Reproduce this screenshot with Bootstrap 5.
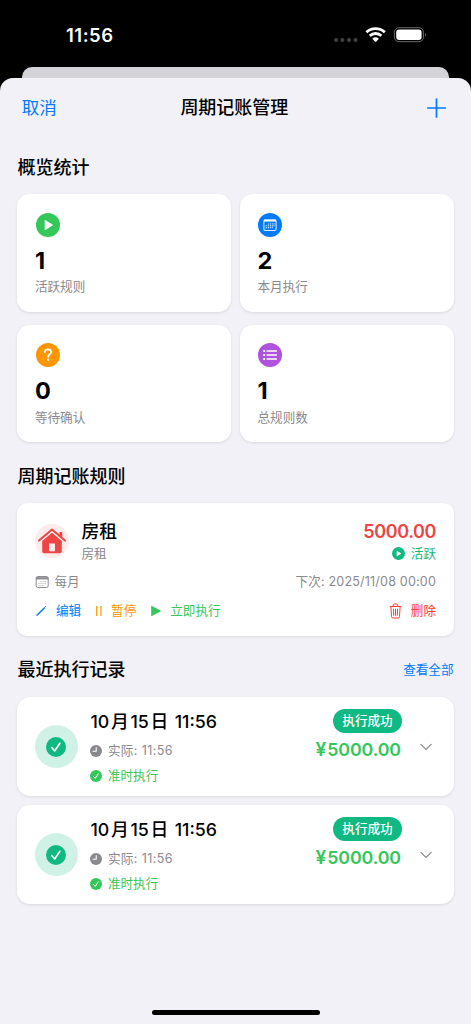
<!DOCTYPE html>
<html lang="zh-CN">
<head>
<meta charset="utf-8">
<meta name="viewport" content="width=device-width, initial-scale=1">
<title>周期记账管理</title>
<link href="https://cdn.jsdelivr.net/npm/bootstrap@5.3.0/dist/css/bootstrap.min.css" rel="stylesheet">
<style>
:root{--ios-blue:#007aff;--ios-green:#34c759;--ios-orange:#ff9500;--ios-red:#ff3b30;--ios-gray:#8a8a8e;--emerald:#10b981;--rose:#ef4444}
body{font-family:Inter,"Noto Sans CJK SC",sans-serif;background:#000;color:#000;height:1024px;overflow:hidden}
svg{display:block;flex:none}
.statusbar{height:67px;padding:22px 44px 0 66px}
.clock{font-size:18.5px;line-height:27px;font-weight:600;letter-spacing:.5px}
.sheet-back{height:11px;margin:0 22px;background:#d4d3d8;border-radius:10px 10px 0 0}
.sheet{height:946px;background:#f2f1f7;border-radius:13px 13px 0 0;padding:0 17.5px 0 17.4px;position:relative}
.topbar{height:60px;padding:0 6.5px 0 4.4px}
.topbar>*{flex:1}
.nav-btn{color:var(--ios-blue);font-size:17.5px;line-height:26px}
.nav-title{font-size:18px;line-height:26px;font-weight:500;white-space:nowrap}
.section-title{font-size:18px;line-height:28px;font-weight:500;margin:0}
.panel{border:0;border-radius:13px;background:#fff;box-shadow:0 1px 3px rgba(0,0,0,.1)}
.stats{display:grid;grid-template-columns:1fr 1fr;gap:13px 9px;margin:12.4px 0 20.6px}
.stat{height:117.5px;padding:18.5px 17.5px 0}
.stat svg{margin-left:1px}
.stat-num{font-size:23.5px;line-height:28px;font-weight:700;margin-top:10px}
.caption{font-size:12.6px;line-height:18px;color:var(--ios-gray);white-space:nowrap}
.stat .caption{margin-top:3.5px}
.rule{height:133.5px;border-radius:10px;padding:15px 17.5px 0;margin:12px 0 19.5px}
.house{width:34px;height:34px;border-radius:50%;background:#fdecec;margin-top:6px}
.rule-copy{margin-left:12.5px}
.rule-name{font-size:17.8px;line-height:27px;font-weight:500}
.rule-meta{margin-top:10px}
.rule-actions{margin-top:11px}
.next-run{letter-spacing:.16px}
.amount{font-size:18px;line-height:27px;font-weight:600;color:var(--rose);letter-spacing:-.4px}
.icon-text{display:flex;align-items:center;gap:5.5px}
.c-blue{color:var(--ios-blue)}.c-orange{color:var(--ios-orange)}.c-green{color:var(--ios-green)}.c-red{color:var(--ios-red)}.c-em{color:var(--emerald)}
.records{display:grid;gap:8.5px;margin-top:13px}
.record{height:99.5px;padding:12px 17.5px 0}
.halo{width:43px;height:43px;border-radius:50%;background:#cff1e6;margin-top:16.5px}
.rec-copy{margin-left:12.5px}
.rec-copy .caption{margin-top:7px}
.rec-time{font-size:17.8px;line-height:26px;font-weight:500;white-space:nowrap}
.rec-time span{margin:0 1.7px}
.actual{letter-spacing:.38px}
.pill{background:var(--emerald);color:#fff;border-radius:12px;font-size:12.6px;font-weight:500;line-height:23.5px;height:24px;width:69px;text-align:center}
.rec-amount{font-size:17.8px;line-height:26px;font-weight:600;color:var(--ios-green);letter-spacing:-.1px;margin:4px 1px 0 0}
.yen{letter-spacing:1px;margin-left:1px;font-size:19px}
.chevron{margin:34px 3px 0 17px}
.home-bar{width:168px;height:5.5px;border-radius:3px;background:#000;position:absolute;left:151.5px;bottom:9px}
</style>
</head>
<body>
<svg width="0" height="0" class="position-absolute">
  <defs>
    <symbol id="play-circle" viewBox="0 0 24 24"><circle cx="12" cy="12" r="12" fill="currentColor"/><path d="M8.7 7.4v9.2q0 .8.8.4l7-4.4q.7-.5 0-1l-7-4.4q-.8-.4-.8.2z" fill="#fff"/></symbol>
    <symbol id="check-circle" viewBox="0 0 24 24"><circle cx="12" cy="12" r="12" fill="currentColor"/><path d="M6.9 12.7l3.5 4.1 6.3-9.3" fill="none" stroke="#fff" stroke-width="1.9" stroke-linecap="round" stroke-linejoin="round"/></symbol>
    <symbol id="clock-dot" viewBox="0 0 12 12"><circle cx="6" cy="6" r="6" fill="currentColor"/><path d="M6.2 2.6V6.2H3" fill="none" stroke="#fff" stroke-width="1.1" stroke-linecap="round" stroke-linejoin="round"/></symbol>
  </defs>
</svg>

<header class="statusbar d-flex justify-content-between align-items-start text-white">
  <div class="clock">11:56</div>
  <svg width="94" height="27" viewBox="0 0 94 27">
    <g fill="#424242"><circle cx="3" cy="18" r="2"/><circle cx="9.5" cy="18" r="2"/><circle cx="16" cy="18" r="2"/><circle cx="22.5" cy="18" r="2"/></g>
    <g fill="none" stroke="#fff" stroke-width="2.8"><path d="M33.4 10.3a13.3 13.3 0 0 1 18.4 0"/><path d="M36.8 13.8a8.4 8.4 0 0 1 11.6 0"/></g>
    <path d="M39.3 16.8a5 5 0 0 1 6.6 0l-2.6 2.7q-.7.6-1.4 0z" fill="#fff"/>
    <rect x="61.4" y="5.7" width="29" height="14" rx="4.5" fill="none" stroke="#6b6b6b"/>
    <rect x="63.2" y="7.4" width="25.4" height="10.6" rx="3" fill="#fff"/>
    <path d="M92 10.6q1.6 2.1 0 4.2z" fill="#777"/>
  </svg>
</header>
<div class="sheet-back"></div>

<main class="sheet">
  <nav class="topbar d-flex align-items-center">
    <div class="nav-btn">取消</div>
    <div class="nav-title text-center">周期记账管理</div>
    <div class="d-flex justify-content-end"><svg width="21" height="20" viewBox="0 0 21 20"><path d="M1.8 10h17.6M10.5 1v18" stroke="#007aff" stroke-width="1.7" stroke-linecap="round"/></svg></div>
  </nav>

  <h2 class="section-title mt-3 overview">概览统计</h2>
  <section class="stats">
    <div class="card panel stat">
      <svg class="c-green" width="24" height="24"><use href="#play-circle"/></svg>
      <div class="stat-num">1</div><div class="caption">活跃规则</div>
    </div>
    <div class="card panel stat">
      <svg width="24" height="24" viewBox="0 0 24 24"><circle cx="12" cy="12" r="12" fill="#007aff"/><rect x="5.9" y="6.7" width="12.2" height="10.8" rx="1.5" fill="none" stroke="#d9ebff" stroke-width="1.1"/><path d="M6 7.7h12" stroke="#fff" stroke-width="1.7"/><path d="M8.2 12v4M10.4 10.5v5.5M12.4 10.2v5.5M14.3 10.2v5.5M16 10.2v3.3" stroke="#b9d9ff" stroke-width="1.1" stroke-dasharray="1.3 .5"/></svg>
      <div class="stat-num">2</div><div class="caption">本月执行</div>
    </div>
    <div class="card panel stat">
      <svg width="24" height="24" viewBox="0 0 24 24"><circle cx="12" cy="12" r="12" fill="#ff9500"/><path d="M8.9 9c.1-1.6 1.3-2.6 3.1-2.6s3.2 1 3.2 2.6c0 2.2-3 2.3-3 4.7" fill="none" stroke="#fff" stroke-width="1.8" stroke-linecap="round"/><circle cx="12.1" cy="16.8" r="1.2" fill="#fff"/></svg>
      <div class="stat-num">0</div><div class="caption">等待确认</div>
    </div>
    <div class="card panel stat">
      <svg width="24" height="24" viewBox="0 0 24 24"><circle cx="12" cy="12" r="12" fill="#af52de"/><path d="M9 8h9.4M9 12h9.4M9 16h9.4" stroke="#fff" stroke-width="1.3" stroke-linecap="round"/><path d="M5.3 8h1.8M5.3 12h1.8M5.3 16h1.8" stroke="#fff" stroke-width="1.9"/></svg>
      <div class="stat-num">1</div><div class="caption">总规则数</div>
    </div>
  </section>

  <h2 class="section-title">周期记账规则</h2>
  <section class="card panel rule">
    <div class="d-flex">
      <div class="house"><svg width="34" height="34" viewBox="0 0 34 34"><path d="M4 16.6L17 5.6l13 11" fill="none" stroke="#ef4444" stroke-width="2" stroke-linecap="round" stroke-linejoin="round"/><path d="M24.5 8h2.8v5.7l-2.8-2.4z" fill="#ef4444"/><path fill-rule="evenodd" d="M17 8.7l9.8 8.3v10.2q0 2-2 2H9.2q-2 0-2-2V17zM14 19.5v7.7h6v-7.7z" fill="#ef4444"/></svg></div>
      <div class="flex-grow-1 rule-copy">
        <div class="rule-name">房租</div><div class="caption">房租</div>
      </div>
      <div class="text-end">
        <div class="amount">5000.00</div>
        <div class="caption c-em icon-text justify-content-end"><svg width="13" height="13"><use href="#play-circle"/></svg><span>活跃</span></div>
      </div>
    </div>
    <div class="d-flex justify-content-between align-items-center caption rule-meta">
      <div class="icon-text"><svg width="14" height="14" viewBox="0 0 14 14"><rect x="1.2" y="1.5" width="12" height="11" rx="1.7" fill="none" stroke="#8a8a8e"/><path d="M1 3.3h12.4" stroke="#8a8a8e" stroke-width="2.2"/><path d="M3.5 8.6h1M3.5 10.6h1M5.5 6.6h1M5.5 8.6h1M5.5 10.6h1M7.5 6.6h1M7.5 8.6h1M7.5 10.6h1M9.7 6.6h1M9.7 8.6h1" stroke="#aaa"/></svg><span>每月</span></div>
      <div class="next-run">下次: 2025/11/08 00:00</div>
    </div>
    <div class="d-flex align-items-center caption rule-actions">
      <svg width="21" height="14" viewBox="0 0 21 14"><path d="M2.3 11L9.8 3.5" stroke="#007aff" stroke-width="1.5"/><path d="M1.2 12.1l.6-1.8 1.2 1.2zM9.7 2.5l.7-.5.8.8-.5.7z" fill="#007aff"/></svg><span class="c-blue">编辑</span>
      <svg width="30" height="14" viewBox="0 0 30 14"><path d="M15.7 2v10M20 2v10" stroke="#ff9500" stroke-width="1.2"/></svg><span class="c-orange">暂停</span>
      <svg width="34" height="14" viewBox="0 0 34 14"><path d="M15.2 2.2v9.6q0 .7.7.3l8.5-4.7q.5-.4 0-.8l-8.5-4.7q-.7-.4-.7.3z" fill="#34c759"/></svg><span class="c-green">立即执行</span>
      <svg class="ms-auto" width="22" height="16" viewBox="0 0 22 16" fill="none" stroke="#ff3b30" stroke-width="1"><path d="M.8 3.5h11.4M4.2 3.3V2q0-1 1-1h2.6q1 0 1 1v1.3M1.9 3.7l.6 9.8q.1 1.5 1.3 1.5h5.4q1.2 0 1.3-1.5l.6-9.8M4.5 5.7l.2 7M6.5 5.7v7M8.5 5.7l-.2 7"/></svg><span class="c-red">删除</span>
    </div>
  </section>

  <div class="d-flex justify-content-between align-items-center">
    <h2 class="section-title">最近执行记录</h2><span class="caption c-blue">查看全部</span>
  </div>
  <section class="records">
    <article class="card panel record flex-row">
      <div class="halo d-flex align-items-center justify-content-center"><svg class="c-em" width="20" height="20"><use href="#check-circle"/></svg></div>
      <div class="flex-grow-1 rec-copy">
        <div class="rec-time">10<span>月</span>15<span>日</span> 11:56</div>
        <div class="caption icon-text"><svg width="12" height="12"><use href="#clock-dot"/></svg><span class="actual">实际: 11:56</span></div>
        <div class="caption c-green icon-text"><svg width="12" height="12"><use href="#check-circle"/></svg><span>准时执行</span></div>
      </div>
      <div class="d-flex flex-column align-items-end"><div class="pill">执行成功</div><div class="rec-amount"><span class="yen">¥</span>5000.00</div></div>
      <svg class="chevron" width="14" height="9" viewBox="0 0 14 9"><path d="M1.8 1.3L7 6.5l5.2-5.2" fill="none" stroke="#8a8a8e" stroke-width="1.2" stroke-linecap="round"/></svg>
    </article>
    <article class="card panel record flex-row">
      <div class="halo d-flex align-items-center justify-content-center"><svg class="c-em" width="20" height="20"><use href="#check-circle"/></svg></div>
      <div class="flex-grow-1 rec-copy">
        <div class="rec-time">10<span>月</span>15<span>日</span> 11:56</div>
        <div class="caption icon-text"><svg width="12" height="12"><use href="#clock-dot"/></svg><span class="actual">实际: 11:56</span></div>
        <div class="caption c-green icon-text"><svg width="12" height="12"><use href="#check-circle"/></svg><span>准时执行</span></div>
      </div>
      <div class="d-flex flex-column align-items-end"><div class="pill">执行成功</div><div class="rec-amount"><span class="yen">¥</span>5000.00</div></div>
      <svg class="chevron" width="14" height="9" viewBox="0 0 14 9"><path d="M1.8 1.3L7 6.5l5.2-5.2" fill="none" stroke="#8a8a8e" stroke-width="1.2" stroke-linecap="round"/></svg>
    </article>
  </section>
  <div class="home-bar"></div>
</main>
<script src="https://cdn.jsdelivr.net/npm/bootstrap@5.3.0/dist/js/bootstrap.bundle.min.js"></script>
</body>
</html>
